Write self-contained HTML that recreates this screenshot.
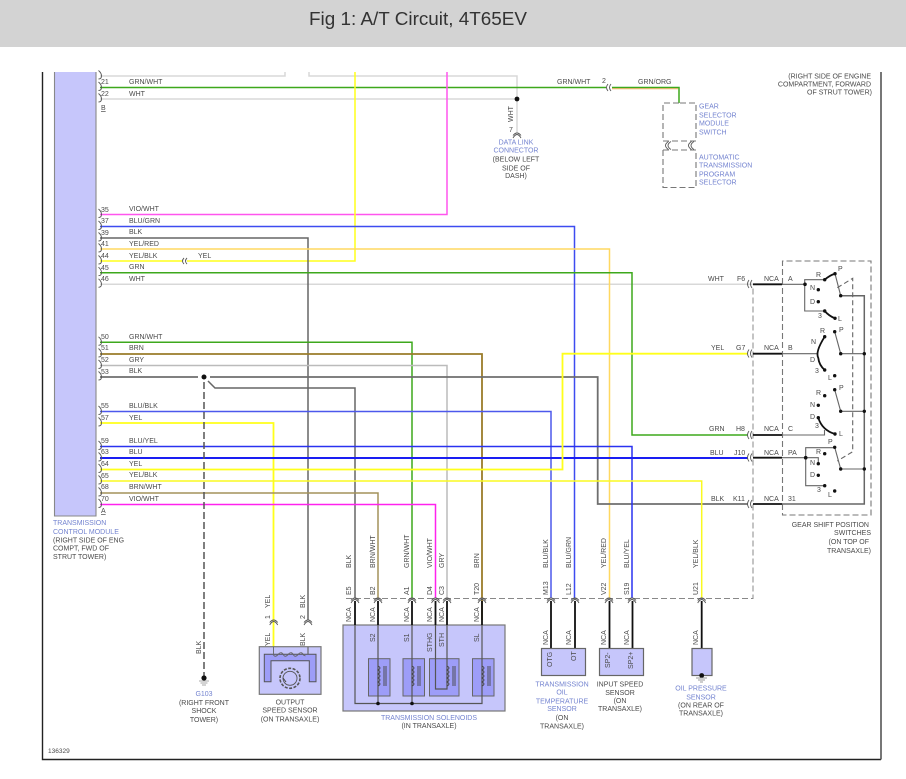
<!DOCTYPE html>
<html><head><meta charset="utf-8"><style>
html,body{margin:0;padding:0;background:#fff;width:906px;height:779px;overflow:hidden}
svg{display:block;filter:blur(.25px)}
text{font-family:"Liberation Sans",sans-serif;font-size:7px;fill:#4a4a4a}
.b text,text.b{fill:#7484d0}
.m text{text-anchor:middle}
.e text{text-anchor:end}
.w{fill:none;stroke-width:1.5}
.n{fill:none;stroke:#111;stroke-width:1.8}
.g{fill:none;stroke:#666;stroke-width:1.1}
.k{fill:none;stroke:#111;stroke-width:1.8}
.d{fill:none;stroke:#777;stroke-width:1.1;stroke-dasharray:6 3}
</style></head><body>
<svg width="906" height="779" viewBox="0 0 906 779" xmlns="http://www.w3.org/2000/svg">
<defs>
<path id="c" d="M98.5,-5.5q3,2.500 3,5.500t-3,3" fill="none" stroke="#555" stroke-width=".9"/>
<path id="u" d="M-4,3q4,-7 8,0M-4,0.5q4,-5 8,0" fill="none" stroke="#555" stroke-width=".9"/>
<path id="r" d="M3,-4q-6,4 0,8M0.5,-4q-6,4 0,8" fill="none" stroke="#555" stroke-width=".9"/>
</defs>
<rect width="906" height="47" fill="#d3d3d3"/>
<text x="309" y="25" style="font-size:18.500px;fill:#333" textLength="218" lengthAdjust="spacingAndGlyphs">Fig 1: A/T Circuit, 4T65EV</text>
<!-- frame -->
<path d="M42.5,72V759.5H881" fill="none" stroke="#222" stroke-width="1.4"/>
<path d="M881,72V759.5" fill="none" stroke="#555" stroke-width="1.6"/>
<path d="M54.500,72V516H96V72" fill="#c6c6fb" stroke="#888" stroke-width="1.100"/>

<!-- wires -->
<g class="w">
<path stroke="#d8d8d8" d="M100,76H285V72M309,72V76H517V133M100,99H517M100,284.300H753"/>
<path stroke="#3da81c" d="M100,87.500H606"/>
<path stroke="#3da81c" d="M612,87.500H679V103"/>
<path stroke="#f2b060" stroke-width="1" d="M612,88.800H678"/>
<path stroke="#ff55ee" d="M100,214.500H447V72"/>
<path stroke="#ffff1a" d="M355,72V261H187M100,261H182"/>
<path stroke="#3d4bf0" d="M100,226.500H574.500V598"/>
<path stroke="#666" d="M100,238H308V620"/>
<path stroke="#ffd860" d="M100,249H609.500V598"/>
<path stroke="#3da81c" d="M100,272.700H632V435H748"/>
<path stroke="#3da81c" d="M100,342.300H412V598"/>
<path stroke="#9a7c2a" stroke-width="1.800" d="M100,354H482V620"/>
<path stroke="#bbb" d="M100,365.500H447V598"/>
<path stroke="#6e6e6e" stroke-width="1.800" d="M100,377H198M210,377H597.700V504H748"/>
<path stroke="#666" d="M208,381L215,388H355V598"/>
<path stroke="#4d58ec" d="M100,411.500H551V598"/>
<path stroke="#ffff1a" stroke-width="1.800" d="M100,423H273.500V648"/>
<path stroke="#2a32f0" d="M100,446.500H632V598"/>
<path stroke="#1a1ef2" stroke-width="2" d="M100,458H748"/>
<path stroke="#ffff1a" stroke-width="1.800" d="M100,469.500H562.500V353.700H748"/>
<path stroke="#fafa20" d="M100,481H701.700V598"/>
<path stroke="#a3925a" d="M100,493H378V598"/>
<path stroke="#ff22ee" d="M100,504.500H435.500V598"/>
</g>
<path d="M204,382V676" fill="none" stroke="#555" stroke-width="1.500" stroke-dasharray="7 3"/>
<circle cx="204" cy="377" r="2.500" fill="#111"/>
<circle cx="517" cy="99" r="2.400" fill="#111"/>
<!-- left connectors -->
<g>
<use href="#c" y="87.500"/><use href="#c" y="99"/><use href="#c" y="76"/><use href="#c" y="214.500"/><use href="#c" y="226.500"/><use href="#c" y="238"/><use href="#c" y="249"/><use href="#c" y="261"/><use href="#c" y="272.700"/><use href="#c" y="284.300"/><use href="#c" y="342.300"/><use href="#c" y="354"/><use href="#c" y="365.500"/><use href="#c" y="377"/><use href="#c" y="411.500"/><use href="#c" y="423"/><use href="#c" y="446.500"/><use href="#c" y="458"/><use href="#c" y="469.500"/><use href="#c" y="481"/><use href="#c" y="493"/><use href="#c" y="504.500"/>
</g>
<text x="101" y="84">21</text><text x="129" y="84">GRN/WHT</text>
<text x="101" y="96">22</text><text x="129" y="96">WHT</text>
<text x="101" y="110" style="text-decoration:underline">B</text>
<text x="101" y="212">35</text><text x="129" y="211">VIO/WHT</text>
<text x="101" y="223">37</text><text x="129" y="223">BLU/GRN</text>
<text x="101" y="235">39</text><text x="129" y="234">BLK</text>
<text x="101" y="246">41</text><text x="129" y="246">YEL/RED</text>
<text x="101" y="258">44</text><text x="129" y="258">YEL/BLK</text><text x="198" y="258">YEL</text>
<path d="M184,258q-3,3 0,6M187,258q-3,3 0,6" fill="none" stroke="#555" stroke-width=".9"/>
<text x="101" y="270">45</text><text x="129" y="269">GRN</text>
<text x="101" y="281">46</text><text x="129" y="281">WHT</text>
<text x="101" y="339">50</text><text x="129" y="339">GRN/WHT</text>
<text x="101" y="350">51</text><text x="129" y="350">BRN</text>
<text x="101" y="362">52</text><text x="129" y="362">GRY</text>
<text x="101" y="374">53</text><text x="129" y="373">BLK</text>
<text x="101" y="408">55</text><text x="129" y="408">BLU/BLK</text>
<text x="101" y="420">57</text><text x="129" y="420">YEL</text>
<text x="101" y="443">59</text><text x="129" y="443">BLU/YEL</text>
<text x="101" y="454">63</text><text x="129" y="454">BLU</text>
<text x="101" y="466">64</text><text x="129" y="466">YEL</text>
<text x="101" y="478">65</text><text x="129" y="477">YEL/BLK</text>
<text x="101" y="489">68</text><text x="129" y="489">BRN/WHT</text>
<text x="101" y="501">70</text><text x="129" y="501">VIO/WHT</text>
<text x="101" y="513" style="text-decoration:underline">A</text>

<text class="b" x="53" y="525">TRANSMISSION</text>
<text class="b" x="53" y="534">CONTROL MODULE</text>
<text x="53" y="542.500">(RIGHT SIDE OF ENG</text>
<text x="53" y="550.700">COMPT, FWD OF</text>
<text x="53" y="559">STRUT TOWER)</text>

<!-- top labels -->
<text x="557" y="84">GRN/WHT</text><text x="602" y="83">2</text><text x="638" y="84">GRN/ORG</text>
<path d="M608,84q-3,3.500 0,7M611,84q-3,3.500 0,7" fill="none" stroke="#555" stroke-width=".9"/>
<text transform="rotate(-90 513 122)" x="513" y="122">WHT</text>
<text x="509" y="132">7</text><use href="#u" x="517" y="135"/>
<g class="m"><text class="b" x="516" y="144.700">DATA LINK</text><text class="b" x="516" y="152.700">CONNECTOR</text><text x="516" y="161.500">(BELOW LEFT</text><text x="516" y="170.500">SIDE OF</text><text x="516" y="178">DASH)</text></g>
<path class="d" d="M679,103H663V141H696V103H679M663,150H696V187.500H663V150"/>
<use href="#r" x="668" y="145.500"/><use href="#r" x="691" y="145.500"/>
<g class="b"><text x="699" y="108.700">GEAR</text><text x="699" y="117.700">SELECTOR</text><text x="699" y="125.500">MODULE</text><text x="699" y="134.500">SWITCH</text><text x="699" y="159.500">AUTOMATIC</text><text x="699" y="167.500">TRANSMISSION</text><text x="699" y="176.500">PROGRAM</text><text x="699" y="184.500">SELECTOR</text></g>
<g class="e"><text x="871" y="78.700">(RIGHT SIDE OF ENGINE</text><text x="871" y="86.700">COMPARTMENT, FORWARD</text><text x="872" y="94.700">OF STRUT TOWER)</text></g>

<!-- dashed lines -->
<path d="M346,598.500H753V288" fill="none" stroke="#888" stroke-width="1" stroke-dasharray="6 3"/>
<path d="M782.500,284V261H871V515H782.500V284" fill="none" stroke="#777" stroke-width="1.100" stroke-dasharray="6 3"/>

<!-- right connector wires -->
<path class="n" d="M753,284.300H782M753,353.700H782M753,435H782M753,457.700H782M753,504H782"/>
<g fill="none" stroke="#555" stroke-width=".9"><path d="M749,280q-3,4 0,8M752,280q-3,4 0,8M749,349.500q-3,4 0,8M752,349.500q-3,4 0,8M749,431q-3,4 0,8M752,431q-3,4 0,8M749,453.500q-3,4 0,8M752,453.500q-3,4 0,8M749,500q-3,4 0,8M752,500q-3,4 0,8"/></g>
<text x="708" y="281">WHT</text><text x="737" y="281">F6</text><text x="764" y="281">NCA</text><text x="788" y="281">A</text>
<text x="711" y="350">YEL</text><text x="736" y="350">G7</text><text x="764" y="350">NCA</text><text x="788" y="350">B</text>
<text x="709" y="431">GRN</text><text x="736" y="431">H8</text><text x="764" y="431">NCA</text><text x="788" y="431">C</text>
<text x="710" y="455">BLU</text><text x="734" y="455">J10</text><text x="764" y="455">NCA</text><text x="788" y="455">PA</text>
<text x="711" y="501">BLK</text><text x="733" y="501">K11</text><text x="764" y="501">NCA</text><text x="788" y="501">31</text>

<!-- switches -->
<g class="g">
<path d="M782,284.300H805M804.700,284V279.700H824.700M804.700,284V311H824.700"/>
<path d="M835,273.700L840.700,295.700M834.700,331.700L840.700,353.700M834.700,389.700L840.700,411.300M834.700,447.300L840.700,469"/>
<path stroke-width="1.500" d="M840.700,295.700H864.300V504H782"/>
<path d="M782,353.700H818M840.700,353.700H864M840.700,411.300H864M840.700,469H864"/>
<path d="M782,435H824.500V430M782,457.700H818.300V463.700M805.700,457.700V447.700H835M805.700,457.700V485.700H824.700"/>
<path stroke-dasharray="5 3" d="M837.300,287.700L852.700,278.300V451.700L837.300,461"/>
</g>
<g class="k">
<path d="M824.700,279.700Q830,275 835,273.700M824.700,311Q829,316 835,318.300"/>
<path d="M824.700,336.700Q815,352 818.300,358Q819,365 824.700,370"/>
<path d="M818.300,417.700Q822,430 835,434"/>
</g>
<g fill="#111">
<circle cx="805" cy="284.300" r="1.800"/><circle cx="824.700" cy="279.700" r="1.700"/><circle cx="835" cy="273.700" r="1.700"/><circle cx="840.700" cy="295.700" r="1.700"/><circle cx="818.300" cy="289.700" r="1.700"/><circle cx="818.300" cy="301.700" r="1.700"/><circle cx="824.700" cy="311" r="1.700"/><circle cx="835" cy="318.300" r="1.700"/>
<circle cx="824.700" cy="336.700" r="1.700"/><circle cx="824.700" cy="370" r="1.700"/><circle cx="834.700" cy="331.700" r="1.700"/><circle cx="840.700" cy="353.700" r="1.700"/><circle cx="864.300" cy="353.700" r="1.700"/><circle cx="834.700" cy="375.700" r="1.700"/>
<circle cx="824.700" cy="395.700" r="1.700"/><circle cx="818.300" cy="405.300" r="1.700"/><circle cx="818.300" cy="417.700" r="1.700"/><circle cx="835" cy="434" r="1.700"/><circle cx="834.700" cy="389.700" r="1.700"/><circle cx="840.700" cy="411.300" r="1.700"/><circle cx="864.300" cy="411.300" r="1.700"/>
<circle cx="805.700" cy="457.700" r="1.800"/><circle cx="834.700" cy="447.300" r="1.700"/><circle cx="824.700" cy="453.700" r="1.700"/><circle cx="818.300" cy="463.700" r="1.700"/><circle cx="818.300" cy="475.300" r="1.700"/><circle cx="824.700" cy="485.700" r="1.700"/><circle cx="834.700" cy="491" r="1.700"/><circle cx="840.700" cy="469" r="1.700"/><circle cx="864.300" cy="469" r="1.700"/>
</g>
<g>
<text x="816" y="277">R</text><text x="838" y="271">P</text><text x="810" y="290">N</text><text x="810" y="304">D</text><text x="818" y="318">3</text><text x="838" y="321">L</text>
<text x="820" y="333">R</text><text x="839" y="332">P</text><text x="811" y="344">N</text><text x="810" y="362">D</text><text x="815" y="373">3</text><text x="828" y="380">L</text>
<text x="816" y="395">R</text><text x="839" y="390">P</text><text x="810" y="407">N</text><text x="810" y="419">D</text><text x="815" y="428">3</text><text x="839" y="436">L</text>
<text x="828" y="444">P</text><text x="816" y="454">R</text><text x="810" y="465">N</text><text x="810" y="477">D</text><text x="817" y="492">3</text><text x="828" y="497">L</text>
</g>
<g class="e"><text x="869" y="527">GEAR SHIFT POSITION</text><text x="871" y="535">SWITCHES</text><text x="869" y="544">(ON TOP OF</text><text x="871" y="553">TRANSAXLE)</text></g>

<!-- transmission solenoids -->
<rect x="343" y="625" width="162" height="86" fill="#c6c6fb" stroke="#777" stroke-width="1.200"/>
<g fill="#9d9df8" stroke="#666"><rect x="368.500" y="658.700" width="21.500" height="37.300"/><rect x="403" y="658.700" width="21.500" height="37.300"/><rect x="429.500" y="658.700" width="29.500" height="37.300"/><rect x="472.500" y="658.700" width="21.500" height="37.300"/></g>
<path class="n" d="M355,601V625M378,601V625M412,601V625M435.500,601V625M447,601V625M482,601V625"/>
<path fill="none" stroke="#555" stroke-width="1.200" d="M355,625V703.500H482V625M378,625V703.500M412,625V703.500M435.500,625V689H447V625"/>
<g fill="none" stroke="#444" stroke-width=".9">
<path d="M378,666q4,2 0,4q4,2 0,4q4,2 0,4q4,2 0,4q4,2 0,4M384,666V686M386,666V686"/>
<path d="M412,666q4,2 0,4q4,2 0,4q4,2 0,4q4,2 0,4q4,2 0,4M418,666V686M420,666V686"/>
<path d="M447,666q4,2 0,4q4,2 0,4q4,2 0,4q4,2 0,4q4,2 0,4M453,666V686M455,666V686"/>
<path d="M482,666q4,2 0,4q4,2 0,4q4,2 0,4q4,2 0,4q4,2 0,4M488,666V686M490,666V686"/>
</g>
<circle cx="378" cy="703.500" r="1.800" fill="#111"/><circle cx="412" cy="703.500" r="1.800" fill="#111"/>
<g class="m"><text class="b" x="429" y="720">TRANSMISSION SOLENOIDS</text><text x="429" y="728">(IN TRANSAXLE)</text></g>

<!-- output speed sensor -->
<use href="#u" x="273.700" y="622"/><use href="#u" x="308" y="622"/>
<rect x="259.300" y="646.700" width="61.700" height="47.600" fill="#c6c6fb" stroke="#777" stroke-width="1.200"/>
<path d="M264.300,654.300H316V681.700H309.300V660.700H271V681.700H264.300Z" fill="#9d9df8" stroke="#555"/>
<path d="M273.500,646.700V655q2,3 5,-1q3,-3 5,1q2,3 5,-1q3,-3 5,1q2,3 5,-1q3,-3 5,1l2,1" fill="none" stroke="#666" stroke-width=".9"/>
<path d="M308,647V654" fill="none" stroke="#666" stroke-width="1.200"/>
<circle cx="290" cy="678.300" r="10" fill="#c6c6fb" stroke="#555" stroke-width="1.600" stroke-dasharray="3 1.500"/>
<circle cx="290" cy="678.300" r="7" fill="#c6c6fb" stroke="#555" stroke-width=".9"/>
<path d="M283,678l3,4" stroke="#444" fill="none"/>
<g class="m"><text x="290" y="704.500">OUTPUT</text><text x="290" y="712.500">SPEED SENSOR</text><text x="290" y="721.500">(ON TRANSAXLE)</text></g>

<!-- G103 -->
<circle cx="204" cy="678" r="2.600" fill="#111"/>
<path d="M199,681H209M200.500,683H207.500M202,685H206" stroke="#aaa" fill="none"/>
<g class="m"><text class="b" x="204" y="696">G103</text><text x="204" y="705">(RIGHT FRONT</text><text x="204" y="713">SHOCK</text><text x="204" y="722">TOWER)</text></g>

<!-- small sensors -->
<path class="n" d="M551,601V648M575,601V648M609.500,601V648M632.500,601V648M701.700,601V648"/>
<g fill="#c6c6fb" stroke="#666" stroke-width="1.200"><rect x="541.500" y="648.500" width="44" height="27"/><rect x="599.500" y="648.500" width="44" height="27"/><rect x="692" y="648.500" width="20" height="27"/></g>
<circle cx="701.700" cy="675.500" r="2.400" fill="#111"/>
<path d="M696,678H707M698,680H705M700,682H703" stroke="#999" fill="none"/>
<g class="m"><text class="b" x="562" y="686.500">TRANSMISSION</text><text class="b" x="562" y="694.500">OIL</text><text class="b" x="562" y="703.500">TEMPERATURE</text><text class="b" x="562" y="711">SENSOR</text><text x="562" y="720">(ON</text><text x="562" y="728.500">TRANSAXLE)</text>
<text x="620" y="686.500">INPUT SPEED</text><text x="620" y="695">SENSOR</text><text x="620" y="703">(ON</text><text x="620" y="711">TRANSAXLE)</text>
<text class="b" x="701" y="690.500">OIL PRESSURE</text><text class="b" x="701" y="699.500">SENSOR</text><text x="701" y="707.500">(ON REAR OF</text><text x="701" y="715.500">TRANSAXLE)</text></g>

<!-- top connectors at y=598 -->
<use href="#u" x="355" y="600"/><use href="#u" x="378" y="600"/><use href="#u" x="412" y="600"/><use href="#u" x="435.500" y="600"/><use href="#u" x="447" y="600"/><use href="#u" x="482" y="600"/><use href="#u" x="551" y="600"/><use href="#u" x="575" y="600"/><use href="#u" x="609" y="600"/><use href="#u" x="632" y="600"/><use href="#u" x="701.700" y="600"/>

<!-- vertical labels -->
<g>
<text transform="rotate(-90 351 568)" x="351" y="568">BLK</text><text transform="rotate(-90 351 595)" x="351" y="595">E5</text><text transform="rotate(-90 351 622)" x="351" y="622">NCA</text>
<text transform="rotate(-90 375 568)" x="375" y="568">BRN/WHT</text><text transform="rotate(-90 375 595)" x="375" y="595">B2</text><text transform="rotate(-90 375 622)" x="375" y="622">NCA</text><text transform="rotate(-90 375 642)" x="375" y="642">S2</text>
<text transform="rotate(-90 409 568)" x="409" y="568">GRN/WHT</text><text transform="rotate(-90 409 595)" x="409" y="595">A1</text><text transform="rotate(-90 409 622)" x="409" y="622">NCA</text><text transform="rotate(-90 409 642)" x="409" y="642">S1</text>
<text transform="rotate(-90 432 568)" x="432" y="568">VIO/WHT</text><text transform="rotate(-90 432 595)" x="432" y="595">D4</text><text transform="rotate(-90 432 622)" x="432" y="622">NCA</text><text transform="rotate(-90 432 652)" x="432" y="652">STHG</text>
<text transform="rotate(-90 444 568)" x="444" y="568">GRY</text><text transform="rotate(-90 444 595)" x="444" y="595">C3</text><text transform="rotate(-90 444 622)" x="444" y="622">NCA</text><text transform="rotate(-90 444 647)" x="444" y="647">STH</text>
<text transform="rotate(-90 479 568)" x="479" y="568">BRN</text><text transform="rotate(-90 479 595)" x="479" y="595">T20</text><text transform="rotate(-90 479 622)" x="479" y="622">NCA</text><text transform="rotate(-90 479 642)" x="479" y="642">SL</text>
<text transform="rotate(-90 548 568)" x="548" y="568">BLU/BLK</text><text transform="rotate(-90 548 595)" x="548" y="595">M13</text><text transform="rotate(-90 548 645)" x="548" y="645">NCA</text><text transform="rotate(-90 552 667)" x="552" y="667">OTG</text>
<text transform="rotate(-90 571 568)" x="571" y="568">BLU/GRN</text><text transform="rotate(-90 571 595)" x="571" y="595">L12</text><text transform="rotate(-90 571 645)" x="571" y="645">NCA</text><text transform="rotate(-90 576 661)" x="576" y="661">OT</text>
<text transform="rotate(-90 606 568)" x="606" y="568">YEL/RED</text><text transform="rotate(-90 606 595)" x="606" y="595">V22</text><text transform="rotate(-90 606 645)" x="606" y="645">NCA</text><text transform="rotate(-90 610 668)" x="610" y="668">SP2-</text>
<text transform="rotate(-90 629 568)" x="629" y="568">BLU/YEL</text><text transform="rotate(-90 629 595)" x="629" y="595">S19</text><text transform="rotate(-90 629 645)" x="629" y="645">NCA</text><text transform="rotate(-90 633 669)" x="633" y="669">SP2+</text>
<text transform="rotate(-90 698 568)" x="698" y="568">YEL/BLK</text><text transform="rotate(-90 698 595)" x="698" y="595">U21</text><text transform="rotate(-90 698 645)" x="698" y="645">NCA</text>
<text transform="rotate(-90 270 608)" x="270" y="608">YEL</text><text transform="rotate(-90 270 619)" x="270" y="619">1</text><text transform="rotate(-90 270 646)" x="270" y="646">YEL</text>
<text transform="rotate(-90 305 608)" x="305" y="608">BLK</text><text transform="rotate(-90 305 619)" x="305" y="619">2</text><text transform="rotate(-90 305 646)" x="305" y="646">BLK</text>
<text transform="rotate(-90 201 654)" x="201" y="654">BLK</text>
</g>
<text x="48" y="753" style="font-size:6.500px">136329</text>
</svg>
</body></html>
